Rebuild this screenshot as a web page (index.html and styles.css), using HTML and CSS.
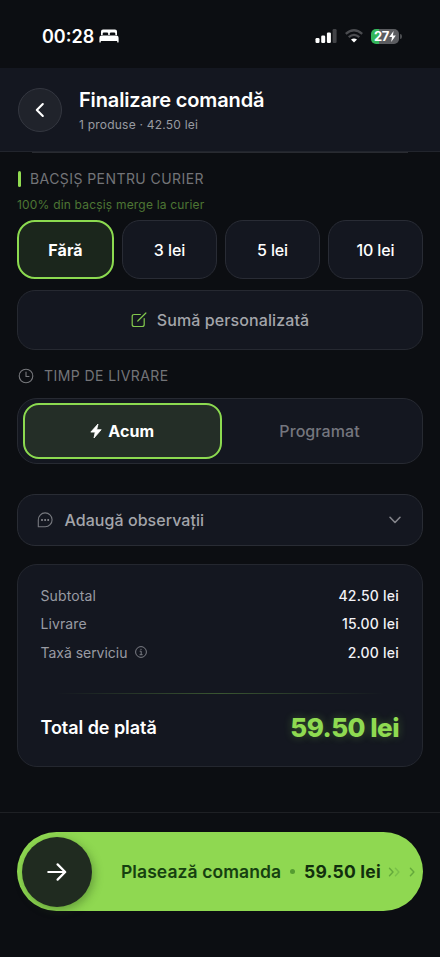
FILE: index.html
```html
<!DOCTYPE html>
<html lang="ro">
<head>
<meta charset="utf-8">
<meta name="viewport" content="width=device-width, initial-scale=1">
<title>Finalizare comandă</title>
<link rel="stylesheet" href="styles.css">
</head>
<body>
<div class="statusbar">
  <div class="clock"><span class="time">00:28</span>
    <svg class="bed" width="20" height="14" viewBox="0 0 20 14" fill="#fff"><path d="M2 6V2.4Q2 .4 4 .4H16Q18 .4 18 2.4V6H16.3V4.6Q16.3 3.4 15.1 3.4H12Q10.8 3.4 10.8 4.6V6H9.2V4.6Q9.2 3.4 8 3.4H4.9Q3.7 3.4 3.7 4.6V6Z"/><path d="M2.2 6.5H17.8Q19.6 6.8 19.6 8.7V12.9Q19.6 13.6 18.9 13.6Q18.2 13.6 18.2 12.9V12H1.8V12.9Q1.8 13.6 1.1 13.6Q.4 13.6 .4 12.9V8.7Q.4 6.8 2.2 6.5Z"/></svg>
  </div>
  <div class="signals">
    <svg width="22" height="14" viewBox="0 0 22 14" fill="#fff"><rect x=".5" y="9" width="4" height="5" rx="1.2"/><rect x="6.2" y="6.6" width="4" height="7.4" rx="1.2"/><rect x="11.9" y="3.5" width="4" height="10.5" rx="1.2"/><rect x="17.6" y="0" width="4" height="14" rx="1.2" fill="#424347"/></svg>
    <svg class="wifi" width="18" height="14" viewBox="0 0 18 14" fill="none" stroke="#4b4c50" stroke-width="2.3"><path d="M.8 4.8Q9-2.3 17.2 4.8"/><path d="M3.7 8.1Q9 3.7 14.3 8.1"/><path d="M9 13.5 6 10.6Q9 8.3 12 10.6Z" fill="#fff" stroke="none"/></svg>
    <div class="battery"><span>27</span><svg width="7" height="11" viewBox="0 0 7 11" fill="#fff"><path d="M4.6 0 .2 6.1H3L2.2 11 6.8 4.6H3.9Z"/></svg></div>
    <i class="battery-tip"></i>
  </div>
</div>
<header class="header">
  <div class="back"><svg width="10" height="16" viewBox="0 0 10 16" fill="none" stroke="#fff" stroke-width="2.1" stroke-linecap="round" stroke-linejoin="round"><path d="M7.8 2 1.8 8l6 6"/></svg></div>
  <div class="heading"><h1><span>Finalizare comandă</span></h1><p><span>1 produse · 42.50 lei</span></p></div>
</header>
<main class="content">
  <div class="edge"></div>
  <div class="label tip-label"><i class="marker"></i><span>BACȘIȘ PENTRU CURIER</span></div>
  <p class="hint"><span>100% din bacșiș merge la curier</span></p>
  <div class="tips">
    <div class="tip selected">Fără</div><div class="tip">3 lei</div><div class="tip">5 lei</div><div class="tip">10 lei</div>
  </div>
  <div class="custom">
    <svg width="16" height="16" viewBox="0 0 16 16" fill="none" stroke="#83c94d" stroke-width="1.2" stroke-linecap="round" stroke-linejoin="round"><path d="M9.3 2.5H3.2Q1.2 2.5 1.2 4.5V12.5Q1.2 14.5 3.2 14.5H11.2Q13.2 14.5 13.2 12.5V6.7M6.8 9 14.9 1"/></svg>
    <span>Sumă personalizată</span>
  </div>
  <div class="label time-label">
    <svg width="16" height="16" viewBox="0 0 16 16" fill="none" stroke="#77787c" stroke-width="1.1" stroke-linecap="round" stroke-linejoin="round"><circle cx="8" cy="8" r="6.8"/><path d="M8 4V8.5H11"/></svg>
    <span>TIMP DE LIVRARE</span>
  </div>
  <div class="segment">
    <div class="choice active"><svg width="12" height="16" viewBox="0 0 12 16" fill="#fff" stroke="#fff" stroke-width=".8" stroke-linejoin="round"><path d="M8 1 .8 9.1H5.2L4 15 11.2 6.7H6.7Z"/></svg><span>Acum</span></div>
    <div class="choice"><span>Programat</span></div>
  </div>
  <div class="notes">
    <svg width="16" height="16" viewBox="0 0 16 16" fill="none" stroke="#77797f" stroke-width="1.1" stroke-linecap="round" stroke-linejoin="round"><path d="M1.3 14.7V8A6.9 6.9 0 1 1 8.2 14.7Z"/><g fill="#8b8c91" stroke="none"><circle cx="5" cy="8" r="1"/><circle cx="8.1" cy="8" r="1"/><circle cx="11.2" cy="8" r="1"/></g></svg>
    <span>Adaugă observații</span>
    <svg class="chevron" width="14" height="8" viewBox="0 0 14 8" fill="none" stroke="#83848a" stroke-width="1.6" stroke-linecap="round" stroke-linejoin="round"><path d="M2 1.3 7 6.5l5-5.2"/></svg>
  </div>
  <section class="summary">
    <div class="row"><span class="name">Subtotal</span><span class="amount">42.50 lei</span></div>
    <div class="row"><span class="name">Livrare</span><span class="amount">15.00 lei</span></div>
    <div class="row"><span class="name fee">Taxă serviciu<svg width="12" height="12" viewBox="0 0 12 12" fill="none" stroke="#7c7e85" stroke-width="1"><circle cx="6" cy="6" r="5.4"/><path d="M4.7 5.2H6.2V8.6M4.6 8.7H7.6" /><circle cx="6" cy="3.3" r=".65" fill="#7c7e85" stroke="none"/></svg></span><span class="amount">2.00 lei</span></div>
    <div class="divider"></div>
    <div class="total"><span class="total-name">Total de plată</span><strong>59.50 lei</strong></div>
  </section>
</main>
<footer class="footer">
  <div class="slide">
    <div class="knob"><svg width="20" height="18" viewBox="0 0 20 18" fill="none" stroke="#fff" stroke-width="2.2" stroke-linecap="round" stroke-linejoin="round"><path d="M1.3 9H18M10.6 1.4 18.2 9l-7.6 7.6"/></svg></div>
    <span class="action">Plasează comanda</span><i class="dot"></i><span class="price">59.50 lei</span>
    <svg class="trail" width="28" height="10" viewBox="0 0 28 10" fill="none" stroke-width="1.4" stroke-linecap="round" stroke-linejoin="round"><path d="M1.5 1.2 5 5 1.5 8.8" stroke="#64a93b"/><path d="M7.4 1.2 10.9 5 7.4 8.8" stroke="#78bf48"/><path d="M22.4 1.2 25.9 5 22.4 8.8" stroke="#64a93b"/></svg>
  </div>
</footer>
</body>
</html>
```
FILE: styles.css
```css
* { box-sizing: border-box; }
body { margin: 0; width: 440px; height: 957px; overflow: hidden; background: #0c0e12; color: #fff; font-family: Inter, "Liberation Sans", sans-serif; }
svg { display: block; flex: none; }
h1, p { margin: 0; font-weight: inherit; }
.statusbar { height: 68px; padding: 4px 38px 0 42px; display: flex; justify-content: space-between; align-items: center; }
.clock { display: flex; align-items: center; gap: 5px; }
.time { font-size: 18px; font-weight: 600; letter-spacing: 0; }
.signals { display: flex; align-items: center; }
.wifi { margin-left: 8px; }
.battery { margin-left: 8px; width: 28px; height: 15px; border-radius: 5px; display: flex; align-items: center; justify-content: center; background: linear-gradient(90deg, #34b65b 27%, #5b5c60 27%); font-size: 13px; font-weight: 700; letter-spacing: -.3px; }
.battery-tip { width: 2px; height: 5px; margin-left: 1px; border-radius: 0 2px 2px 0; background: #4b4c50; }
.header { height: 84px; padding: 0 17.5px; display: flex; align-items: center; gap: 17.5px; background: #141720; border-bottom: 1px solid #22252d; }
.back { width: 44px; height: 44px; border: 1px solid #343740; border-radius: 50%; background: #20232b; display: flex; align-items: center; justify-content: center; }
.heading { padding-top: 2px; }
.heading h1 { font-size: 20px; line-height: 26px; font-weight: 600; letter-spacing: -.14px; }
.heading p { margin-top: 3px; font-size: 12px; line-height: 18px; color: #999ba1; letter-spacing: .22px; }
.content { padding: 0 17px; }
.edge { height: 1px; margin: 0 15px; background: #292b31; }
.label { display: flex; align-items: center; color: #737478; font-size: 14px; line-height: 20px; letter-spacing: .43px; }
.tip-label { height: 20px; margin-top: 16px; padding-left: 1px; gap: 9px; }
.marker { width: 3px; height: 16px; border-radius: 2px; background: #91db51; }
.hint { height: 16px; margin-top: 8px; line-height: 16px; font-size: 12px; color: #4d7634; letter-spacing: .19px; }
.tips { margin-top: 7px; display: grid; grid-template-columns: 97px 95px 95px 95px; gap: 8px; height: 59px; }
.tip { border: 1px solid #292c35; border-radius: 18px; background: #141720; display: flex; align-items: center; justify-content: center; font-size: 16px; font-weight: 500; letter-spacing: -.1px; }
.tip.selected { border: 2px solid #8cda50; background: #1b261c; font-weight: 700; letter-spacing: .1px; }
.custom { height: 60px; margin-top: 11px; border: 1px solid #262931; border-radius: 18px; background: #141720; display: flex; align-items: center; justify-content: center; gap: 10px; color: #a3a5aa; font-size: 16px; font-weight: 450; letter-spacing: .1px; }
.time-label { height: 20px; margin-top: 16px; padding-left: 1px; gap: 10px; }
.segment { height: 66px; margin-top: 12px; padding: 4px; border: 1px solid #272a32; border-radius: 20px; background: #141720; display: grid; grid-template-columns: 200px 1fr; }
.choice { display: flex; align-items: center; justify-content: center; gap: 6px; padding-right: 1px; font-size: 16px; font-weight: 500; color: #74767e; letter-spacing: .07px; }
.choice.active { margin-left: .5px; padding-right: 0; border: 2px solid #8cda50; border-radius: 16px; background: #242e27; font-weight: 700; color: #fff; }
.notes { height: 52px; margin-top: 30px; padding: 0 20px 0 18.5px; border: 1px solid #292c34; border-radius: 18px; background: #141720; display: flex; align-items: center; gap: 12px; font-size: 16px; font-weight: 450; color: #a3a5aa; letter-spacing: .05px; }
.chevron { margin-left: auto; }
.summary { height: 203px; margin-top: 18px; padding: 16px 23px 0 22.5px; border: 1px solid #24272f; border-radius: 20px; background: #141720; }
.row { height: 28.5px; display: flex; align-items: center; justify-content: space-between; font-size: 14px; }
.name { color: #999ba3; letter-spacing: .1px; }
.fee { display: flex; align-items: center; gap: 8px; letter-spacing: -.03px; }
.amount { font-weight: 500; color: #f2f2f6; letter-spacing: .22px; }
.divider { height: 1px; margin: 26px 15px 0; background: linear-gradient(90deg, transparent, #3a5631 50%, transparent); }
.total { height: 68px; display: flex; align-items: center; justify-content: space-between; }
.total-name { font-size: 18px; font-weight: 600; letter-spacing: -.05px; }
.total strong { color: #8fda51; font-size: 26px; font-weight: 800; letter-spacing: -.52px; text-shadow: 0 0 8px #85d84b55; }
.footer { margin-top: 45px; height: 145px; border-top: 1px solid #1e2024; padding: 19px 17px 0; }
.slide { height: 79px; padding-left: 5px; border-radius: 40px; background: #8fd851; display: flex; align-items: center; color: #164010; font-size: 17px; }
.knob { flex: none; width: 70px; height: 70px; border-radius: 50%; background: #202b20; box-shadow: 2px 3px 10px #26481966; display: flex; align-items: center; justify-content: center; }
.action { margin-left: 29px; font-size: 17.5px; font-weight: 600; letter-spacing: .08px; white-space: nowrap; }
.dot { flex: none; width: 5px; height: 5px; margin: 0 9px; border-radius: 50%; background: #559c31; }
.price { font-size: 17.5px; font-weight: 700; letter-spacing: .22px; color: #112f0d; white-space: nowrap; }
.trail { margin-left: 7px; }
```
